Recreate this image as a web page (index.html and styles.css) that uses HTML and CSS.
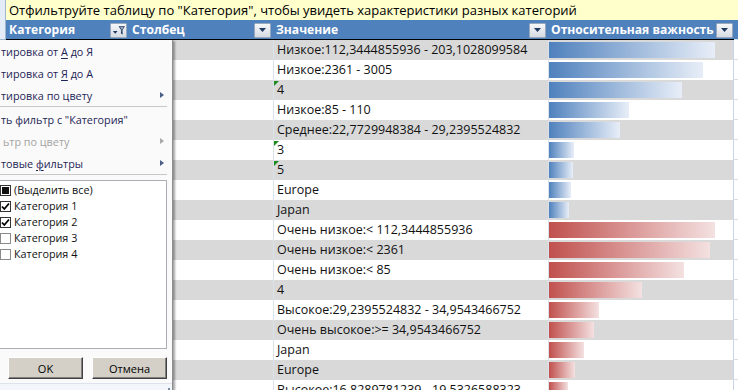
FILE: index.html
```html
<!DOCTYPE html>
<html lang="ru">
<head>
<meta charset="utf-8">
<title>Фильтр</title>
<link rel="stylesheet" href="styles.css">
</head>
<body>
<div class="sheet">
  <div class="row title-row">
    <div class="rh"></div>
    <div class="title">Отфильтруйте таблицу по "Категория", чтобы увидеть характеристики разных категорий</div>
  </div>
  <div class="row head">
    <div class="rh"></div>
    <div class="hc"><span>Категория</span>
      <span class="dd"><svg width="16" height="13" viewBox="0 0 16 13"><path d="M2 7h5L4.5 10z" fill="#1F3A60"/><path d="M8 2h7l-2.6 3.6v5.2l-1.8-1V5.6z" fill="#1F3A60"/><path d="M9.6 3h3.8l-1.5 2v3.6l-.4-.2V5z" fill="#c8d0dc"/></svg></span></div>
    <div class="hc"><span>Столбец</span>
      <span class="dd"><svg width="7" height="4" viewBox="0 0 7 4"><path d="M0 0h7L3.5 4z" fill="#1F3A60"/></svg></span></div>
    <div class="hc"><span>Значение</span>
      <span class="dd"><svg width="7" height="4" viewBox="0 0 7 4"><path d="M0 0h7L3.5 4z" fill="#1F3A60"/></svg></span></div>
    <div class="hc last"><span>Относительная важность</span>
      <span class="dd"><svg width="7" height="4" viewBox="0 0 7 4"><path d="M0 0h7L3.5 4z" fill="#1F3A60"/></svg></span></div>
    <div class="hc rest"></div>
  </div>

  <div class="row band"><div class="rh"></div><div class="c"></div><div class="c"></div><div class="c v">Низкое:112,3444855936 - 203,1028099584</div><div class="c b"><div class="bar blue" style="width:166px"></div></div><div class="rest"></div></div>
  <div class="row"><div class="rh"></div><div class="c"></div><div class="c"></div><div class="c v">Низкое:2361 - 3005</div><div class="c b"><div class="bar blue" style="width:154px"></div></div><div class="rest"></div></div>
  <div class="row band"><div class="rh"></div><div class="c"></div><div class="c"></div><div class="c v tri">4</div><div class="c b"><div class="bar blue" style="width:133px"></div></div><div class="rest"></div></div>
  <div class="row"><div class="rh"></div><div class="c"></div><div class="c"></div><div class="c v">Низкое:85 - 110</div><div class="c b"><div class="bar blue" style="width:80px"></div></div><div class="rest"></div></div>
  <div class="row band"><div class="rh"></div><div class="c"></div><div class="c"></div><div class="c v">Среднее:22,7729948384 - 29,2395524832</div><div class="c b"><div class="bar blue" style="width:71px"></div></div><div class="rest"></div></div>
  <div class="row"><div class="rh"></div><div class="c"></div><div class="c"></div><div class="c v tri">3</div><div class="c b"><div class="bar blue" style="width:25px"></div></div><div class="rest"></div></div>
  <div class="row band"><div class="rh"></div><div class="c"></div><div class="c"></div><div class="c v tri">5</div><div class="c b"><div class="bar blue" style="width:24px"></div></div><div class="rest"></div></div>
  <div class="row"><div class="rh"></div><div class="c"></div><div class="c"></div><div class="c v">Europe</div><div class="c b"><div class="bar blue" style="width:22px"></div></div><div class="rest"></div></div>
  <div class="row band"><div class="rh"></div><div class="c"></div><div class="c"></div><div class="c v">Japan</div><div class="c b"><div class="bar blue" style="width:20px"></div></div><div class="rest"></div></div>
  <div class="row"><div class="rh"></div><div class="c"></div><div class="c"></div><div class="c v">Очень низкое:&lt; 112,3444855936</div><div class="c b"><div class="bar red" style="width:166px"></div></div><div class="rest"></div></div>
  <div class="row band"><div class="rh"></div><div class="c"></div><div class="c"></div><div class="c v">Очень низкое:&lt; 2361</div><div class="c b"><div class="bar red" style="width:161px"></div></div><div class="rest"></div></div>
  <div class="row"><div class="rh"></div><div class="c"></div><div class="c"></div><div class="c v">Очень низкое:&lt; 85</div><div class="c b"><div class="bar red" style="width:135px"></div></div><div class="rest"></div></div>
  <div class="row band"><div class="rh"></div><div class="c"></div><div class="c"></div><div class="c v">4</div><div class="c b"><div class="bar red" style="width:93px"></div></div><div class="rest"></div></div>
  <div class="row"><div class="rh"></div><div class="c"></div><div class="c"></div><div class="c v">Высокое:29,2395524832 - 34,9543466752</div><div class="c b"><div class="bar red" style="width:50px"></div></div><div class="rest"></div></div>
  <div class="row band"><div class="rh"></div><div class="c"></div><div class="c"></div><div class="c v">Очень высокое:&gt;= 34,9543466752</div><div class="c b"><div class="bar red" style="width:45px"></div></div><div class="rest"></div></div>
  <div class="row"><div class="rh"></div><div class="c"></div><div class="c"></div><div class="c v">Japan</div><div class="c b"><div class="bar red" style="width:35px"></div></div><div class="rest"></div></div>
  <div class="row band"><div class="rh"></div><div class="c"></div><div class="c"></div><div class="c v">Europe</div><div class="c b"><div class="bar red" style="width:26px"></div></div><div class="rest"></div></div>
  <div class="row"><div class="rh"></div><div class="c"></div><div class="c"></div><div class="c v">Высокое:16,8289781239 - 19,5326588323</div><div class="c b"><div class="bar red" style="width:19px"></div></div><div class="rest"></div></div>

  <div class="menu">
    <div class="mi"><span>тировка от <u>А</u> до Я</span></div>
    <div class="mi"><span>тировка от <u>Я</u> до А</span></div>
    <div class="mi"><span>тировка по цвету</span><i class="arr"></i></div>
    <div class="sep"></div>
    <div class="mi"><span>ть фильтр с "Категория"</span></div>
    <div class="mi dis"><span>ьтр по цвету</span><i class="arr"></i></div>
    <div class="mi"><span>товые <u>ф</u>ильтры</span><i class="arr"></i></div>
    <div class="sep sep2"></div>
    <div class="list">
      <div class="li"><span class="cb mixed"><span></span></span>(Выделить все)</div>
      <div class="li"><span class="cb on"><svg width="9" height="9" viewBox="0 0 9 9"><path d="M1 4.5l2.3 2.5L8 1.5" fill="none" stroke="#000" stroke-width="1.8"/></svg></span>Категория 1</div>
      <div class="li"><span class="cb on"><svg width="9" height="9" viewBox="0 0 9 9"><path d="M1 4.5l2.3 2.5L8 1.5" fill="none" stroke="#000" stroke-width="1.8"/></svg></span>Категория 2</div>
      <div class="li"><span class="cb"></span>Категория 3</div>
      <div class="li"><span class="cb"></span>Категория 4</div>
    </div>
    <div class="btns">
      <button class="btn">OK</button>
      <button class="btn">Отмена</button>
    </div>
    <div class="grip"><span></span></div>
  </div>
</div>
</body>
</html>
```

FILE: styles.css
```css
* { box-sizing: border-box; }
html, body { margin: 0; padding: 0; }
body {
  width: 738px;
  height: 390px;
  overflow: hidden;
  background: #fff;
  font-family: "Open Sans", "Noto Sans", sans-serif;
}
.sheet { position: relative; width: 738px; height: 390px; overflow: hidden; }

.row {
  display: grid;
  grid-template-columns: 6px 123px 144px 275px 186px 1fr;
  height: 20px;
}
.title-row { grid-template-columns: 6px 1fr; }
.rh { background: #E4ECF7; border-right: 1px solid #9EB6CE; border-bottom: 1px solid #9EB6CE; }

.title {
  background: #FFFFCC;
  padding-left: 3px;
  font-size: 13px;
  line-height: 20px;
  color: #000;
  white-space: nowrap;
  border-bottom: 1px solid #E8E8C0;
}

.hc {
  background: #4F81BD;
  border-bottom: 1px solid #000;
  display: flex;
  align-items: center;
  color: #fff;
  font-weight: bold;
  font-size: 12.1px;
  padding-left: 3px;
  padding-right: 2px;
  white-space: nowrap;
}
.hc.last { padding-right: 1px; }
.hc.rest { padding: 0; }
.dd {
  margin-left: auto;
  width: 17px;
  height: 15px;
  margin-top: 1px;
  border: 1px solid #9AA8BE;
  border-radius: 1px;
  background: linear-gradient(#F6F7F9, #D6DBE3);
  display: flex;
  align-items: center;
  justify-content: center;
}

.c {
  font-size: 12.5px;
  line-height: 20px;
  color: #111;
  white-space: nowrap;
  position: relative;
}
.band .c { background: #D9D9D9; }
.c.v { padding-left: 3px; border-left: 1px solid #DCE2EA; }
.c.b { border-left: 1px solid #DCE2EA; border-right: 1px solid #C9D4E5; }
.rest { border-bottom: 1px solid #D6DEEA; }
.tri::before {
  content: "";
  position: absolute;
  left: 0;
  top: 1px;
  border-top: 5px solid #1F8A1F;
  border-right: 5px solid transparent;
}

.bar { height: 16px; margin-top: 2px; }
.bar.blue { background: linear-gradient(90deg, #4F81BD, #E8EEF8); }
.bar.red { background: linear-gradient(90deg, #C0504D, #F4E1E1); }

/* dropdown menu overlay */
.menu {
  position: absolute;
  left: 0;
  top: 40px;
  width: 173px;
  height: 352px;
  background: #FAFAFA;
  border-right: 1px solid #8E8E8E;
  box-shadow: 3px 0 2px -1px rgba(0,0,0,0.35);
  font-family: "Open Sans", "Noto Sans", sans-serif;
  font-size: 10.8px;
  overflow: hidden;
}
.mi {
  height: 22px;
  display: flex;
  align-items: center;
  padding-left: 1px;
  color: #1E2556;
  white-space: nowrap;
}
.mi u { text-decoration: underline; text-underline-offset: 2px; }
.mi.dis { color: #A4A4A4; padding-left: 3px; }
.arr {
  margin-left: auto;
  margin-right: 8px;
  width: 0;
  height: 0;
  border-top: 3.5px solid transparent;
  border-bottom: 3.5px solid transparent;
  border-left: 4px solid #4A5E86;
}
.mi.dis .arr { border-left-color: #A8A8A8; }
.sep {
  width: 167px;
  height: 2px;
  border-top: 1px solid #C8C8C8;
}
.sep2 { height: 6px; }

.list {
  margin-left: -2px;
  width: 169px;
  height: 169px;
  background: #fff;
  border: 1px solid #ABADB3;
  color: #111;
}
.li {
  height: 16px;
  display: flex;
  align-items: center;
  gap: 3px;
  padding-left: 1px;
  white-space: nowrap;
}
.cb {
  width: 11px;
  height: 11px;
  margin-top: 2px;
  border: 1px solid #8A8A8A;
  background: #fff;
  display: flex;
  align-items: center;
  justify-content: center;
  flex: none;
}
.cb.on, .cb.mixed { border-color: #333; }
.cb.mixed span { width: 7px; height: 7px; background: #111; }

.btns {
  display: flex;
  gap: 9px;
  padding-left: 8px;
  margin-top: 8px;
}
.btn {
  width: 75px;
  height: 22px;
  font-family: "Open Sans", "Noto Sans", sans-serif;
  font-size: 11px;
  color: #000;
  background: #D4D0C8;
  border: 1px solid;
  border-color: #FFFFFF #404040 #404040 #FFFFFF;
  box-shadow: inset -1px -1px 0 #808080;
  padding: 0;
}
.grip {
  margin-top: 4px;
  height: 10px;
  border-top: 1px solid #DCE3EC;
  background: #F3F6FA;
  position: relative;
}
.grip span {
  position: absolute;
  right: 2px;
  top: 4px;
  width: 2px;
  height: 2px;
  background: #7A8AA5;
}
```
